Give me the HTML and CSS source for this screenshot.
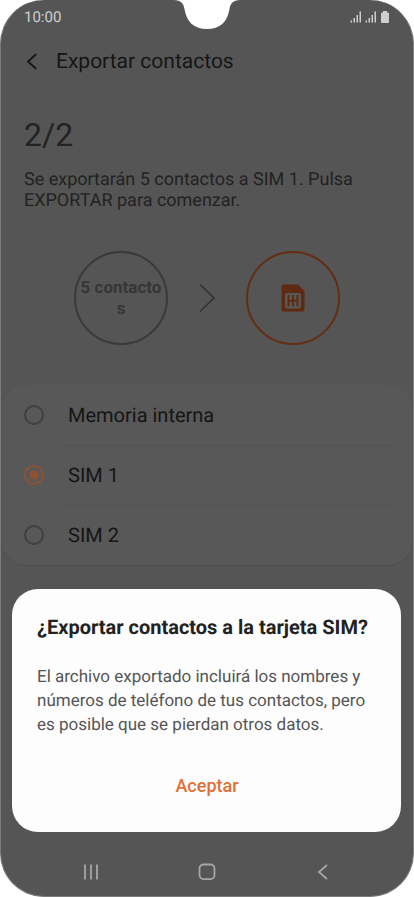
FILE: index.html
```html
<!DOCTYPE html>
<html lang="es">
<head>
  <meta charset="UTF-8" />
  <meta name="viewport" content="width=device-width, initial-scale=1.0"/>
  <title>Exportar contactos</title>
  <link rel="stylesheet" href="styles.css">
</head>
<body>

  <div class="phone">

    <!-- Camera notch -->
    <svg class="notch" width="66" height="30" viewBox="0 0 66 30" aria-hidden="true">
      <path d="M0 0C7 0.500 9.500 3 10.500 9C12.500 22 20 29 33 29S53.500 22 55.500 9C56.500 3 59 0.500 66 0Z" fill="#fff"/>
    </svg>

    <!-- Status bar -->
    <div class="status-bar">
      <span class="time">10:00</span>
      <svg class="status-icons" width="40" height="14" viewBox="0 0 40 14" fill="#cfcfcf" aria-hidden="true">
        <path d="M0.500 10.500h1.500v2h-1.500zM3.500 8h1.500v4.500h-1.500zM6.500 5h1.500v7.500h-1.500zM9.500 1.500h1.500v11h-1.500z"/>
        <path d="M15.500 10.500h1.500v2h-1.500zM18.500 8h1.500v4.500h-1.500zM21.500 5h1.500v7.500h-1.500zM24.500 1.500h1.500v11h-1.500z"/>
        <path d="M33 1h4v1.500h1a1 1 0 0 1 1 1v8.500a1 1 0 0 1-1 1h-6a1 1 0 0 1-1-1v-8.500a1 1 0 0 1 1-1h1z"/>
      </svg>
    </div>

    <header class="header">
      <button class="icon-button" type="button" aria-label="Atrás">
        <svg width="12" height="18" viewBox="0 0 12 18" fill="none" stroke="#151515" stroke-width="1.800">
          <path d="M10.300 1L2 8.500l8.300 7.500"/>
        </svg>
      </button>
      <h1 class="title">Exportar contactos</h1>
    </header>

    <main class="content">
      <div class="step">2/2</div>
      <p class="description">Se exportarán 5 contactos a SIM 1. Pulsa EXPORTAR para comenzar.</p>

      <div class="transfer">
        <div class="circle">5 contactos</div>
        <svg width="16" height="30" viewBox="0 0 16 30" fill="none" stroke="#333" stroke-width="1.600" aria-hidden="true">
          <path d="M1 1.500L15 15L1 28.500"/>
        </svg>
        <div class="circle circle-sim">
          <svg width="24" height="28" viewBox="0 0 24 28" aria-hidden="true">
            <path d="M2.500 0.500H17L23.500 7V25.500a2 2 0 0 1-2 2H2.500a2 2 0 0 1-2-2V2.500a2 2 0 0 1 2-2z" fill="#5f2a11"/>
            <rect x="4" y="9" width="16" height="15.500" rx="2" fill="#585858"/>
            <path d="M7.500 11v11.500M12 11v11.500M16.500 11v11.500M7.500 16.700h9" fill="none" stroke="#5f2a11" stroke-width="2"/>
          </svg>
        </div>
      </div>
    </main>

    <div class="options">
      <label class="option">
        <input type="radio" name="target" />
        <span class="option-text">Memoria interna</span>
      </label>
      <label class="option">
        <input type="radio" name="target" checked />
        <span class="option-text">SIM 1</span>
      </label>
      <label class="option">
        <input type="radio" name="target" />
        <span class="option-text">SIM 2</span>
      </label>
    </div>

    <!-- Confirmation dialog -->
    <div class="dialog" role="dialog" aria-labelledby="dialogTitle">
      <h2 class="dialog-title" id="dialogTitle">¿Exportar contactos a la tarjeta SIM?</h2>
      <p class="dialog-text">El archivo exportado incluirá los nombres y números de teléfono de tus contactos, pero es posible que se pierdan otros datos.</p>
      <button class="dialog-button" type="button">Aceptar</button>
    </div>

    <!-- Navigation bar -->
    <nav class="nav-bar">
      <button class="icon-button" type="button" aria-label="Recientes">
        <svg width="18" height="18" viewBox="0 0 18 18" fill="none" stroke="#a6a6a6" stroke-width="1.800">
          <path d="M3 1.500v15M9 1.500v15M15 1.500v15"/>
        </svg>
      </button>
      <button class="icon-button" type="button" aria-label="Inicio">
        <svg width="18" height="18" viewBox="0 0 18 18" fill="none" stroke="#a6a6a6" stroke-width="1.800">
          <rect x="1.500" y="1.500" width="15" height="14.600" rx="4"/>
        </svg>
      </button>
      <button class="icon-button" type="button" aria-label="Atrás">
        <svg width="18" height="18" viewBox="0 0 18 18" fill="none" stroke="#a6a6a6" stroke-width="1.800">
          <path d="M13 2L5 9l8 7"/>
        </svg>
      </button>
    </nav>

  </div>

</body>
</html>
```
FILE: styles.css
```css
* {
  box-sizing: border-box;
}

body {
  margin: 0;
  background-color: #fff;
  font-family: Roboto, Arial, sans-serif;
  text-rendering: geometricPrecision;
}

h1, h2, p {
  margin: 0;
}

button {
  border: none;
  background: none;
  padding: 0;
  font-family: inherit;
  cursor: pointer;
}

svg {
  display: block;
}

.phone {
  position: relative;
  display: flex;
  flex-direction: column;
  min-height: 100vh;
  border: 1px solid #7c7c7c;
  border-top: none;
  border-radius: 44px;
  background-color: #555;
  overflow: hidden;
}

.notch {
  position: absolute;
  top: 0;
  left: 50%;
  transform: translateX(-50%);
}

.status-bar {
  display: flex;
  justify-content: space-between;
  align-items: center;
  height: 33px;
  padding: 0 23px;
  color: #cfcfcf;
  font-size: 15px;
}

.header {
  display: flex;
  align-items: center;
  gap: 18px;
  height: 58px;
  padding: 0 25px;
}

.title {
  color: #151515;
  font-size: 21px;
  font-weight: 400;
}

.content {
  padding: 24px 23px 40px;
  color: #222;
}

.step {
  font-size: 32px;
  line-height: 40px;
}

.description {
  margin-top: 14px;
  font-size: 18px;
  line-height: 21px;
}

.transfer {
  display: flex;
  justify-content: center;
  align-items: center;
  gap: 31px;
  margin-top: 40px;
}

.circle {
  display: flex;
  justify-content: center;
  align-items: center;
  width: 94px;
  height: 94px;
  padding: 2px 4px 0;
  border: 2px solid #3a3a3a;
  border-radius: 50%;
  color: #363636;
  font-size: 17px;
  font-weight: 700;
  line-height: 21px;
  text-align: center;
  word-break: break-all;
}

.circle-sim {
  padding: 0;
  border-color: #652d14;
}

.options {
  padding: 0 17px 0 23px;
  border-radius: 26px;
  background-color: #585858;
  box-shadow: 0 1px 1px #505050;
}

.option {
  display: flex;
  align-items: center;
  gap: 18px;
  height: 60px;
}

.option-text {
  flex: 1;
  padding-left: 6px;
  border-top: 1px solid transparent;
  color: #151515;
  font-size: 20px;
  line-height: 59px;
}

.option + .option .option-text {
  border-top-color: #525252;
}

.option input {
  appearance: none;
  width: 20px;
  height: 20px;
  margin: 0;
  padding: 3px;
  border: 2px solid #404040;
  border-radius: 50%;
}

.option input:checked {
  border-color: #8e5233;
  background: radial-gradient(circle closest-side, #8e5233 90%, transparent) content-box;
}

.dialog {
  position: absolute;
  right: 12px;
  bottom: 64px;
  left: 11px;
  padding: 24px;
  padding-left: 25px;
  border-radius: 26px;
  background-color: #fdfdfd;
}

.dialog-title {
  color: #222;
  font-size: 20px;
  font-weight: 700;
  line-height: 28px;
}

.dialog-text {
  margin-top: 24px;
  color: #555;
  font-size: 17px;
  line-height: 24px;
}

.dialog-button {
  display: block;
  width: 100%;
  margin-top: 27px;
  color: #df7039;
  font-size: 18px;
  font-weight: 500;
  line-height: 44px;
}

.nav-bar {
  display: flex;
  justify-content: space-around;
  align-items: center;
  height: 48px;
  margin-top: auto;
  padding: 0 32px;
}
```
